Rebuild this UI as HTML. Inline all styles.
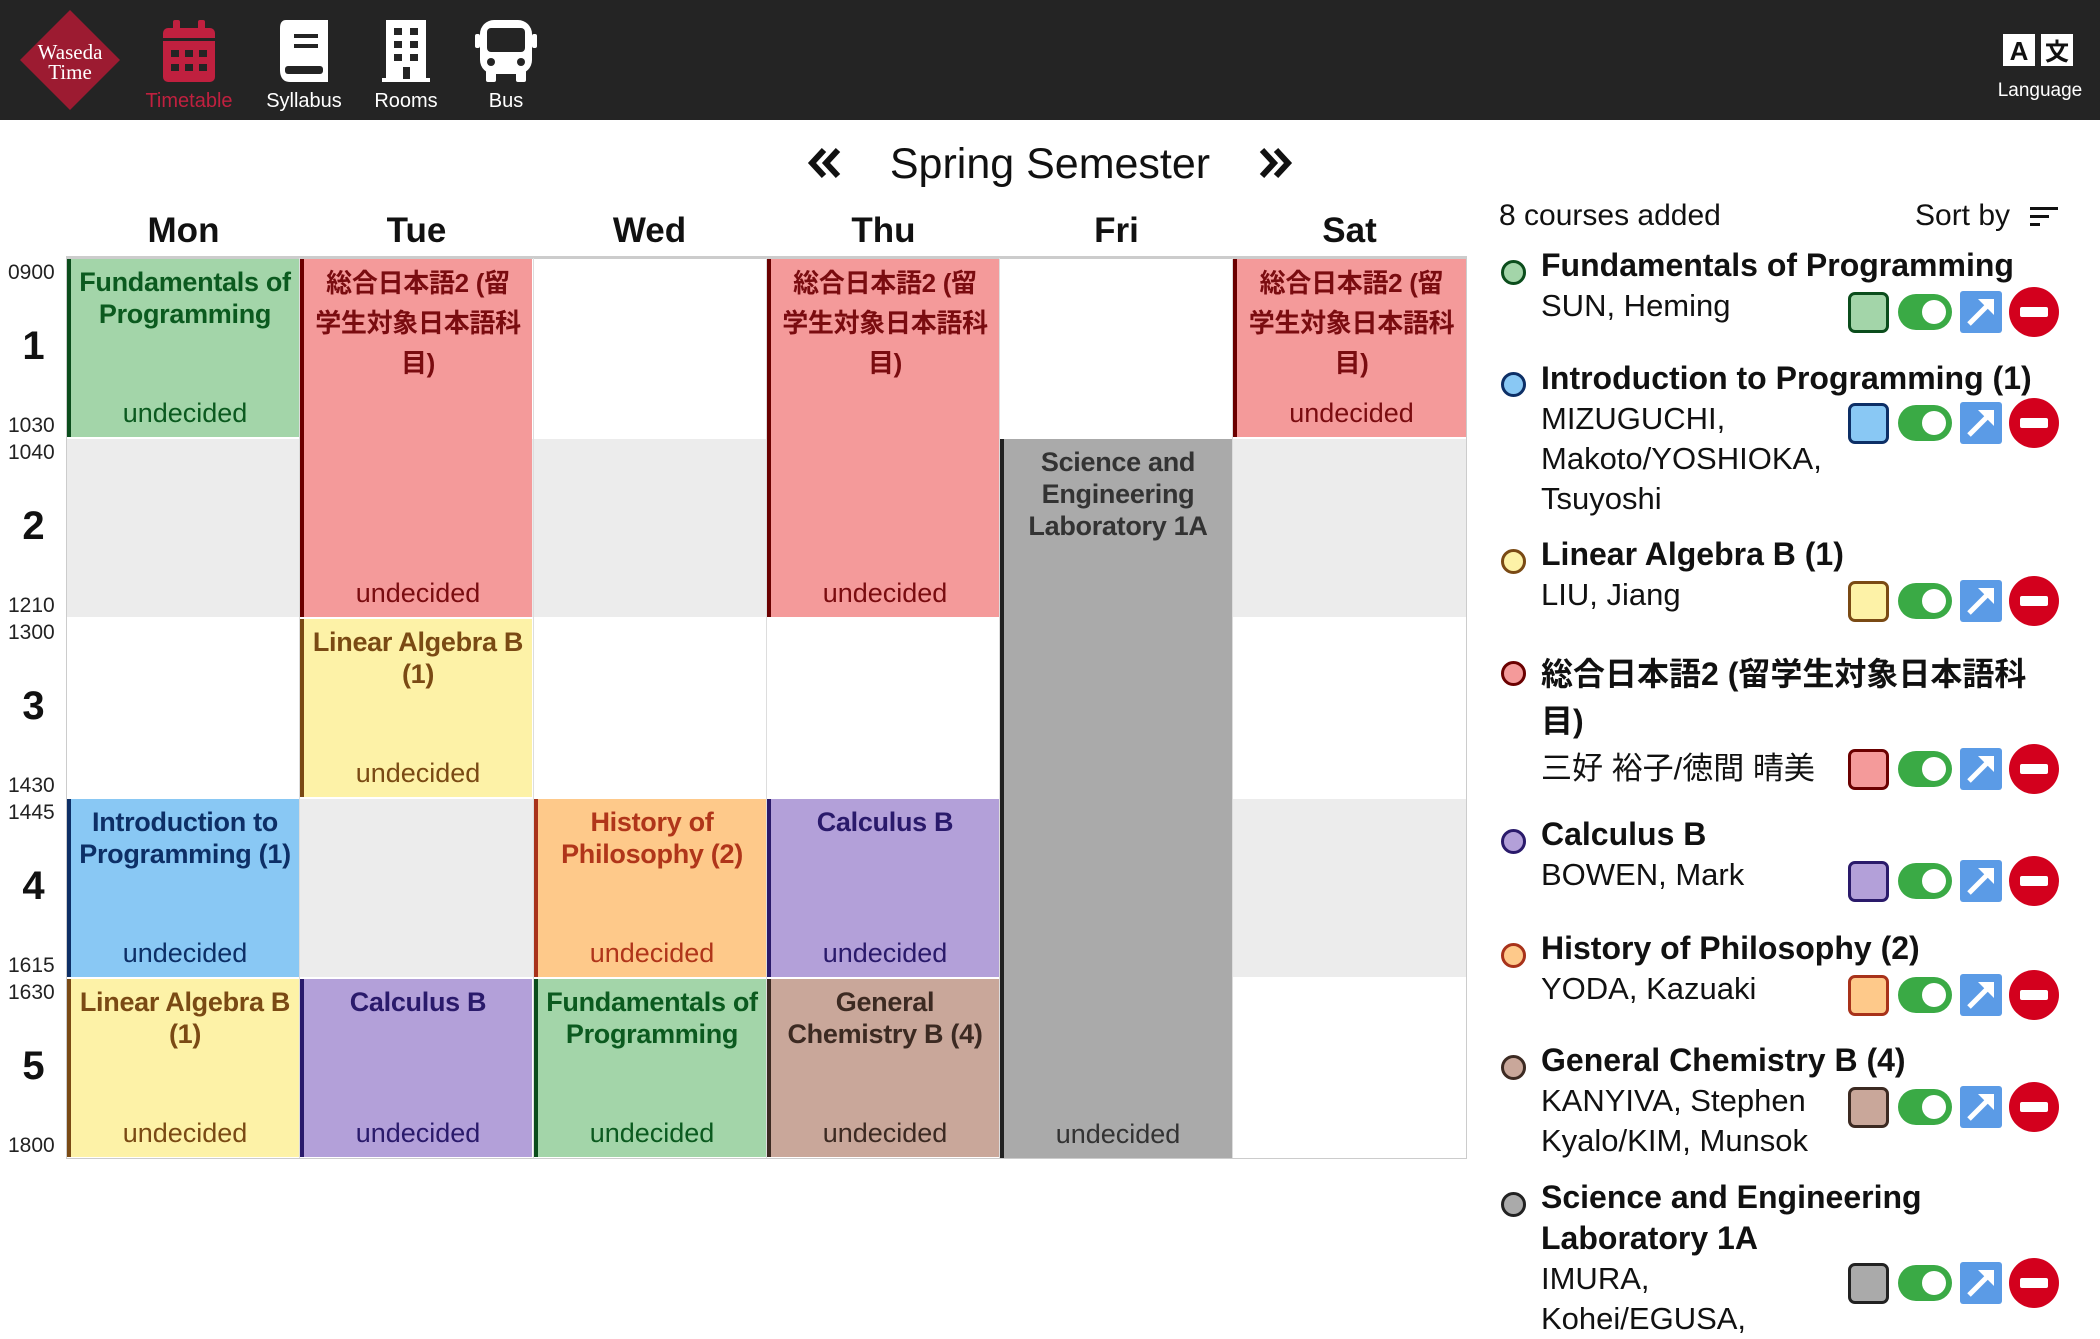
<!DOCTYPE html>
<html><head><meta charset="utf-8"><style>
*{margin:0;padding:0;box-sizing:border-box}
body{width:2100px;height:1332px;overflow:hidden;background:#fff;font-family:"Liberation Sans","Noto Sans CJK JP",sans-serif;position:relative;color:#111}
.hdr{position:absolute;left:0;top:0;width:2100px;height:120px;background:#242424}
.nav{position:absolute;top:20px;width:100px;text-align:center;color:#fff;font-size:20px}
.nav svg{display:block;margin:0 auto 6px}
.abs{position:absolute}
.day{position:absolute;top:211px;width:233px;text-align:center;font-weight:bold;font-size:35px}
.cell{position:absolute}
.ev{position:absolute;text-align:center;border-left:4px solid}
.ev .t{font-weight:bold;font-size:27px;line-height:32px;padding-top:7px;white-space:nowrap;letter-spacing:-0.3px}
.ev .t.jp{line-height:40px;padding-top:4px;font-size:26px}
.ev .u{position:absolute;left:0;right:0;bottom:8px;font-size:27px;line-height:32px}
.tm{position:absolute;left:8px;font-size:21px;color:#222}
.pn{position:absolute;left:0;width:67px;text-align:center;font-weight:bold;font-size:40px}
.it{position:absolute;left:1541px;font-size:31px;line-height:40px;white-space:nowrap}
.it b{font-size:32px}
.dot{position:absolute;left:1501px;width:25px;height:25px;border-radius:50%;border:3px solid}
.btns{position:absolute;left:1848px;width:212px;height:50px}
.sw{position:absolute;left:0;top:5px;width:41px;height:41px;border-radius:7px;border:3px solid}
.tg{position:absolute;left:50px;top:7px;width:54px;height:36px;border-radius:18px;background:#3aaa45}
.tg:after{content:"";position:absolute;right:6px;top:6px;width:24px;height:24px;border-radius:50%;background:#fff}
.lk{position:absolute;left:112px;top:4px;width:42px;height:42px;background:#5b9be6;border-radius:3px}
.rm{position:absolute;left:161px;top:0;width:50px;height:50px;border-radius:50%;background:#d3001d}
.rm:after{content:"";position:absolute;left:11px;top:20px;width:28px;height:10px;background:#fff;border-radius:2px}
</style></head><body>
<div class="hdr">
 <svg class="abs" style="left:18px;top:10px" width="104" height="100"><polygon points="52,0 102,50 52,100 2,50" fill="#9c1b31"/><text x="52" y="49" font-family="Liberation Serif" font-size="21" fill="#fff" text-anchor="middle">Waseda</text><text x="52" y="69" font-family="Liberation Serif" font-size="21" fill="#fff" text-anchor="middle">Time</text></svg>
 <div class="nav" style="left:139px;color:#c0203f"><svg width="56" height="64" viewBox="0 0 56 64"><rect x="12" y="0" width="7" height="12" rx="2" fill="#c0203f"/><rect x="37" y="0" width="7" height="12" rx="2" fill="#c0203f"/><rect x="2" y="8" width="52" height="54" rx="5" fill="#c0203f"/><rect x="2" y="18" width="52" height="3" fill="#242424"/><g fill="#242424"><rect x="10" y="30" width="8" height="7"/><rect x="24" y="30" width="8" height="7"/><rect x="38" y="30" width="8" height="7"/><rect x="10" y="44" width="8" height="7"/><rect x="24" y="44" width="8" height="7"/><rect x="38" y="44" width="8" height="7"/></g></svg>Timetable</div>
 <div class="nav" style="left:254px"><svg width="56" height="64" viewBox="0 0 56 64"><path d="M10 0H52V62H14C5 62 4 54 4 50V8C4 3 6 0 10 0Z" fill="#fff"/><rect x="18" y="14" width="24" height="4" fill="#242424"/><rect x="18" y="24" width="24" height="4" fill="#242424"/><rect x="9" y="46" width="38" height="8" rx="3" fill="#242424"/></svg>Syllabus</div>
 <div class="nav" style="left:356px"><svg width="56" height="64" viewBox="0 0 56 64"><rect x="8" y="0" width="40" height="60" fill="#fff"/><rect x="4" y="58" width="48" height="4" fill="#fff"/><g fill="#242424"><rect x="16" y="8" width="8" height="7"/><rect x="32" y="8" width="8" height="7"/><rect x="16" y="21" width="8" height="7"/><rect x="32" y="21" width="8" height="7"/><rect x="16" y="34" width="8" height="7"/><rect x="32" y="34" width="8" height="7"/><rect x="25" y="47" width="7" height="12"/></g></svg>Rooms</div>
 <div class="nav" style="left:456px"><svg width="64" height="64" viewBox="0 0 64 64"><rect x="6" y="0" width="52" height="54" rx="14" fill="#fff"/><rect x="1" y="14" width="5" height="14" rx="2" fill="#fff"/><rect x="58" y="14" width="5" height="14" rx="2" fill="#fff"/><rect x="12" y="50" width="10" height="12" rx="2" fill="#fff"/><rect x="42" y="50" width="10" height="12" rx="2" fill="#fff"/><rect x="13" y="8" width="38" height="24" rx="4" fill="#242424"/><circle cx="17" cy="42" r="4" fill="#242424"/><circle cx="47" cy="42" r="4" fill="#242424"/></svg>Bus</div>
 <svg class="abs" style="left:2003px;top:32px" width="72" height="36"><rect x="0" y="2" width="32" height="32" fill="#fff"/><text x="16" y="28" font-size="26" font-weight="bold" text-anchor="middle" fill="#111">A</text><rect x="38" y="2" width="32" height="32" fill="#fff"/><text x="54" y="28" font-size="24" font-weight="bold" text-anchor="middle" fill="#111" font-family="Noto Sans CJK JP">文</text></svg>
 <div class="abs" style="left:1988px;top:80px;width:104px;text-align:center;color:#fff;font-size:19px">Language</div>
</div>

<svg class="abs" style="left:806px;top:146px" width="36" height="34" viewBox="0 0 36 34"><path d="M18 4L6 17L18 30M32 4L20 17L32 30" stroke="#111" stroke-width="6" fill="none"/></svg>
<div class="abs" style="left:860px;top:140px;width:380px;text-align:center;font-size:43px">Spring Semester</div>
<svg class="abs" style="left:1258px;top:146px" width="36" height="34" viewBox="0 0 36 34"><path d="M4 4L16 17L4 30M18 4L30 17L18 30" stroke="#111" stroke-width="6" fill="none"/></svg>

<div class="day" style="left:67px">Mon</div><div class="day" style="left:300px">Tue</div><div class="day" style="left:533px">Wed</div><div class="day" style="left:767px">Thu</div><div class="day" style="left:1000px">Fri</div><div class="day" style="left:1233px">Sat</div>

<div class="abs" style="left:66px;top:256px;width:1401px;height:903px;border:1px solid #ccc;border-top:3px solid #ccc"></div>
<div class="cell" style="left:67px;top:439px;width:1399px;height:178px;background:#ececec"></div>
<div class="cell" style="left:67px;top:799px;width:1399px;height:178px;background:#ececec"></div>
<div class="abs" style="left:299px;top:258px;width:1px;height:900px;background:#ddd"></div>
<div class="abs" style="left:533px;top:258px;width:1px;height:900px;background:#ddd"></div>
<div class="abs" style="left:766px;top:258px;width:1px;height:900px;background:#ddd"></div>
<div class="abs" style="left:999px;top:258px;width:1px;height:900px;background:#ddd"></div>
<div class="abs" style="left:1232px;top:258px;width:1px;height:900px;background:#ddd"></div>

<div class="tm" style="top:261px">0900</div><div class="pn" style="top:324px">1</div><div class="tm" style="top:414px">1030</div>
<div class="tm" style="top:441px">1040</div><div class="pn" style="top:504px">2</div><div class="tm" style="top:594px">1210</div>
<div class="tm" style="top:621px">1300</div><div class="pn" style="top:684px">3</div><div class="tm" style="top:774px">1430</div>
<div class="tm" style="top:801px">1445</div><div class="pn" style="top:864px">4</div><div class="tm" style="top:954px">1615</div>
<div class="tm" style="top:981px">1630</div><div class="pn" style="top:1044px">5</div><div class="tm" style="top:1134px">1800</div>

<div class="ev" style="left:67px;top:259px;width:232px;height:178px;background:#a3d5a9;border-color:#0b4d1c;color:#0b5a1f"><div class="t">Fundamentals of<br>Programming</div><div class="u">undecided</div></div>
<div class="ev" style="left:300px;top:259px;width:232px;height:358px;background:#f49a9a;border-color:#6b0000;color:#7a0c10"><div class="t jp">総合日本語2 (留<br>学生対象日本語科<br>目)</div><div class="u">undecided</div></div>
<div class="ev" style="left:767px;top:259px;width:232px;height:358px;background:#f49a9a;border-color:#6b0000;color:#7a0c10"><div class="t jp">総合日本語2 (留<br>学生対象日本語科<br>目)</div><div class="u">undecided</div></div>
<div class="ev" style="left:1233px;top:259px;width:233px;height:178px;background:#f49a9a;border-color:#6b0000;color:#7a0c10"><div class="t jp">総合日本語2 (留<br>学生対象日本語科<br>目)</div><div class="u">undecided</div></div>
<div class="ev" style="left:1000px;top:439px;width:232px;height:719px;background:#aaaaaa;border-color:#222;color:#333"><div class="t">Science and<br>Engineering<br>Laboratory 1A</div><div class="u">undecided</div></div>
<div class="ev" style="left:300px;top:619px;width:232px;height:178px;background:#fdf2a7;border-color:#7a4a14;color:#7a4a14"><div class="t">Linear Algebra B<br>(1)</div><div class="u">undecided</div></div>
<div class="ev" style="left:67px;top:799px;width:232px;height:178px;background:#89c8f4;border-color:#0d2f66;color:#0d2f66"><div class="t">Introduction to<br>Programming (1)</div><div class="u">undecided</div></div>
<div class="ev" style="left:534px;top:799px;width:232px;height:178px;background:#fec98a;border-color:#a8321a;color:#b0351a"><div class="t">History of<br>Philosophy (2)</div><div class="u">undecided</div></div>
<div class="ev" style="left:767px;top:799px;width:232px;height:178px;background:#b3a0d9;border-color:#2a1a6b;color:#2a1a6b"><div class="t">Calculus B</div><div class="u">undecided</div></div>
<div class="ev" style="left:67px;top:979px;width:232px;height:178px;background:#fdf2a7;border-color:#7a4a14;color:#7a4a14"><div class="t">Linear Algebra B<br>(1)</div><div class="u">undecided</div></div>
<div class="ev" style="left:300px;top:979px;width:232px;height:178px;background:#b3a0d9;border-color:#2a1a6b;color:#2a1a6b"><div class="t">Calculus B</div><div class="u">undecided</div></div>
<div class="ev" style="left:534px;top:979px;width:232px;height:178px;background:#a3d5a9;border-color:#0b4d1c;color:#0b5a1f"><div class="t">Fundamentals of<br>Programming</div><div class="u">undecided</div></div>
<div class="ev" style="left:767px;top:979px;width:232px;height:178px;background:#c9a79a;border-color:#3c2a22;color:#3c2a22"><div class="t">General<br>Chemistry B (4)</div><div class="u">undecided</div></div>

<div class="abs" style="left:1499px;top:199px;font-size:30px">8 courses added</div>
<div class="abs" style="left:1915px;top:199px;font-size:30px">Sort by</div>
<svg class="abs" style="left:2030px;top:206px" width="28" height="22"><rect x="0" y="1" width="28" height="3" fill="#111"/><rect x="0" y="9" width="19" height="3" fill="#111"/><rect x="0" y="17" width="10" height="3" fill="#111"/></svg>

<div class="dot" style="top:260px;background:#a3d5a9;border-color:#0b4d1c"></div>
<div class="it" style="top:245px"><b>Fundamentals of Programming</b><br>SUN, Heming</div>
<div class="btns" style="top:287px"><div class="sw" style="background:#a3d5a9;border-color:#0b4d1c"></div><div class="tg"></div><div class="lk"><svg width="42" height="42"><path d="M9 33L27 15" stroke="#fff" stroke-width="5"/><path d="M18 8H34V24Z" fill="#fff"/></svg></div><div class="rm"></div></div>

<div class="dot" style="top:372px;background:#89c8f4;border-color:#0d2f66"></div>
<div class="it" style="top:358px"><b>Introduction to Programming (1)</b><br>MIZUGUCHI,<br>Makoto/YOSHIOKA,<br>Tsuyoshi</div>
<div class="btns" style="top:398px"><div class="sw" style="background:#89c8f4;border-color:#0d2f66"></div><div class="tg"></div><div class="lk"><svg width="42" height="42"><path d="M9 33L27 15" stroke="#fff" stroke-width="5"/><path d="M18 8H34V24Z" fill="#fff"/></svg></div><div class="rm"></div></div>

<div class="dot" style="top:549px;background:#fdf2a7;border-color:#7a4a14"></div>
<div class="it" style="top:534px"><b>Linear Algebra B (1)</b><br>LIU, Jiang</div>
<div class="btns" style="top:576px"><div class="sw" style="background:#fdf2a7;border-color:#7a4a14"></div><div class="tg"></div><div class="lk"><svg width="42" height="42"><path d="M9 33L27 15" stroke="#fff" stroke-width="5"/><path d="M18 8H34V24Z" fill="#fff"/></svg></div><div class="rm"></div></div>

<div class="dot" style="top:661px;background:#f49a9a;border-color:#6b0000"></div>
<div class="it" style="top:651px;line-height:47px"><b>総合日本語2 (留学生対象日本語科<br>目)</b><br>三好 裕子/徳間 晴美</div>
<div class="btns" style="top:744px"><div class="sw" style="background:#f49a9a;border-color:#6b0000"></div><div class="tg"></div><div class="lk"><svg width="42" height="42"><path d="M9 33L27 15" stroke="#fff" stroke-width="5"/><path d="M18 8H34V24Z" fill="#fff"/></svg></div><div class="rm"></div></div>

<div class="dot" style="top:829px;background:#b3a0d9;border-color:#2a1a6b"></div>
<div class="it" style="top:814px"><b>Calculus B</b><br>BOWEN, Mark</div>
<div class="btns" style="top:856px"><div class="sw" style="background:#b3a0d9;border-color:#2a1a6b"></div><div class="tg"></div><div class="lk"><svg width="42" height="42"><path d="M9 33L27 15" stroke="#fff" stroke-width="5"/><path d="M18 8H34V24Z" fill="#fff"/></svg></div><div class="rm"></div></div>

<div class="dot" style="top:943px;background:#fec98a;border-color:#a8321a"></div>
<div class="it" style="top:928px"><b>History of Philosophy (2)</b><br>YODA, Kazuaki</div>
<div class="btns" style="top:970px"><div class="sw" style="background:#fec98a;border-color:#a8321a"></div><div class="tg"></div><div class="lk"><svg width="42" height="42"><path d="M9 33L27 15" stroke="#fff" stroke-width="5"/><path d="M18 8H34V24Z" fill="#fff"/></svg></div><div class="rm"></div></div>

<div class="dot" style="top:1055px;background:#c9a79a;border-color:#3c2a22"></div>
<div class="it" style="top:1040px"><b>General Chemistry B (4)</b><br>KANYIVA, Stephen<br>Kyalo/KIM, Munsok</div>
<div class="btns" style="top:1082px"><div class="sw" style="background:#c9a79a;border-color:#3c2a22"></div><div class="tg"></div><div class="lk"><svg width="42" height="42"><path d="M9 33L27 15" stroke="#fff" stroke-width="5"/><path d="M18 8H34V24Z" fill="#fff"/></svg></div><div class="rm"></div></div>

<div class="dot" style="top:1192px;background:#aaaaaa;border-color:#222"></div>
<div class="it" style="top:1177px"><b>Science and Engineering<br>Laboratory 1A</b><br>IMURA,<br>Kohei/EGUSA,</div>
<div class="btns" style="top:1258px"><div class="sw" style="background:#aaaaaa;border-color:#222"></div><div class="tg"></div><div class="lk"><svg width="42" height="42"><path d="M9 33L27 15" stroke="#fff" stroke-width="5"/><path d="M18 8H34V24Z" fill="#fff"/></svg></div><div class="rm"></div></div>
</body></html>
